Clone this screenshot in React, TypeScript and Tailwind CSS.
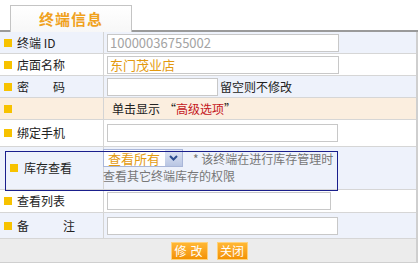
import React from 'react';

const font = { fontFamily: '"Noto Sans CJK SC", "Noto Sans", sans-serif' };

const Label: React.FC<{ text: string; gap?: string }> = ({ text, gap }) => (
  <div className="flex items-center h-full pl-[4px] gap-[5px] border-r border-[#d4d4d4]">
    <span className="w-[8px] h-[8px] bg-[#f7c200] shrink-0" />
    {gap ? (
      <span className="flex text-[12px] text-[#222] leading-none">
        <span>{text[0]}</span>
        <span className={gap} />
        <span>{text[1]}</span>
      </span>
    ) : (
      <span className="text-[12px] text-[#222] whitespace-pre leading-none">{text}</span>
    )}
  </div>
);

const Row: React.FC<{ h: string; bg: string; label: string; gap?: string; children?: React.ReactNode }> = ({ h, bg, label, gap, children }) => (
  <div className={`grid grid-cols-[104px_1fr] border-b border-[#d6d6d6] ${h} ${bg}`}>
    <Label text={label} gap={gap} />
    <div className="flex items-center pl-[3px]">{children}</div>
  </div>
);

const Input: React.FC<{ w: string; value?: string; color?: string }> = ({ w, value, color = 'text-[#a3a3a3]' }) => (
  <div className={`${w} h-[18px] bg-white border border-[#c8c8c8] flex items-center px-[2px] text-[13px] leading-none ${color}`}>
    {value}
  </div>
);

export default function App() {
  return (
    <div className="w-[420px] h-[276px] bg-white relative" style={font}>
      <div className="h-[32px] flex items-end">
        <div className="w-[10px] border-b-2 border-[#9a9a9a]" />
        <div className="w-[122px] h-[27px] border border-b-0 border-[#c4c4c4] bg-gradient-to-b from-white to-[#f7f7f7] flex items-center justify-center">
          <span className="text-[15px] font-bold text-[#f0a21e] tracking-[1px]">终端信息</span>
        </div>
        <div className="flex-1 mr-[2px] border-b-2 border-[#9a9a9a]" />
      </div>

      <div className="w-[418px] border-r-2 border-[#cfcfcf]">
        <Row h="h-[22px]" bg="bg-[#eef2fb]" label="终端 ID">
          <Input w="w-[232px]" value="10000036755002" />
        </Row>
        <Row h="h-[22px]" bg="bg-white" label="店面名称">
          <Input w="w-[232px]" value="东门茂业店" color="text-[#e39a10]" />
        </Row>
        <Row h="h-[22px]" bg="bg-[#eef2fb]" label="密码" gap="w-[24px]">
          <Input w="w-[111px]" />
          <span className="ml-[2px] text-[12px] text-[#222]">留空则不修改</span>
        </Row>
        <div className="grid grid-cols-[104px_1fr] h-[22px] bg-[#fbeedf] border-b border-[#d6d6d6]">
          <Label text="" />
          <div className="flex items-center pl-[8px] text-[12px] text-[#222]">
            <span>单击显示</span>
            <span className="ml-[4px]">“</span>
            <span className="text-[#c4161c]">高级选项</span>
            <span>”</span>
          </div>
        </div>
        <Row h="h-[27px]" bg="bg-white" label="绑定手机">
          <Input w="w-[231px]" />
        </Row>
        <div className="grid grid-cols-[104px_1fr] h-[43px] bg-[#eef2fb] border-b border-[#d6d6d6]">
          <div className="flex items-center pl-[10px] gap-[6px] border-r border-[#d4d4d4]">
            <span className="w-[8px] h-[8px] bg-[#f7c200]" />
            <span className="text-[12px] text-[#222]">库存查看</span>
          </div>
          <div className="pt-[2px] text-[12px] leading-[17px] text-[#777]">
            <div className="flex items-center -ml-[1px]">
              <div className="w-[80px] h-[18px] bg-white border border-[#a9b6d8] flex items-center justify-between">
                <span className="pl-[4px] text-[13px] text-[#e39a10]">查看所有</span>
                <span className="w-[17px] h-[16px] bg-gradient-to-b from-[#dfe6f5] to-[#b9c6e3] flex items-center justify-center">
                  <svg width="9" height="6" viewBox="0 0 9 6"><path d="M1 1 L4.5 4.5 L8 1" stroke="#2e4f91" strokeWidth="2" fill="none" /></svg>
                </span>
              </div>
              <span className="ml-[10px]">* 该终端在进行库存管理时</span>
            </div>
            <div className="-ml-[1px]">查看其它终端库存的权限</div>
          </div>
        </div>
        <Row h="h-[23px]" bg="bg-white" label="查看列表">
          <Input w="w-[224px]" />
        </Row>
        <Row h="h-[26px]" bg="bg-[#eef2fb]" label="备注" gap="w-[34px]">
          <Input w="w-[231px]" />
        </Row>
        <div className="h-[24px] bg-[#ececec] border-b border-[#cfcfcf] flex items-center justify-center gap-[9px] pl-[2px]">
          <button className="w-[37px] h-[18px] bg-gradient-to-b from-[#ffb733] to-[#f39200] border border-[#ffd27a] text-white text-[12px] leading-none tracking-[4px] pl-[3px]">修改</button>
          <button className="w-[31px] h-[18px] bg-gradient-to-b from-[#ffb733] to-[#f39200] border border-[#ffd27a] text-white text-[12px] leading-none">关闭</button>
        </div>
      </div>

      <div className="absolute left-[5px] top-[151px] w-[333px] h-[40px] border border-[#1a1f8c] pointer-events-none" />
    </div>
  );
}
